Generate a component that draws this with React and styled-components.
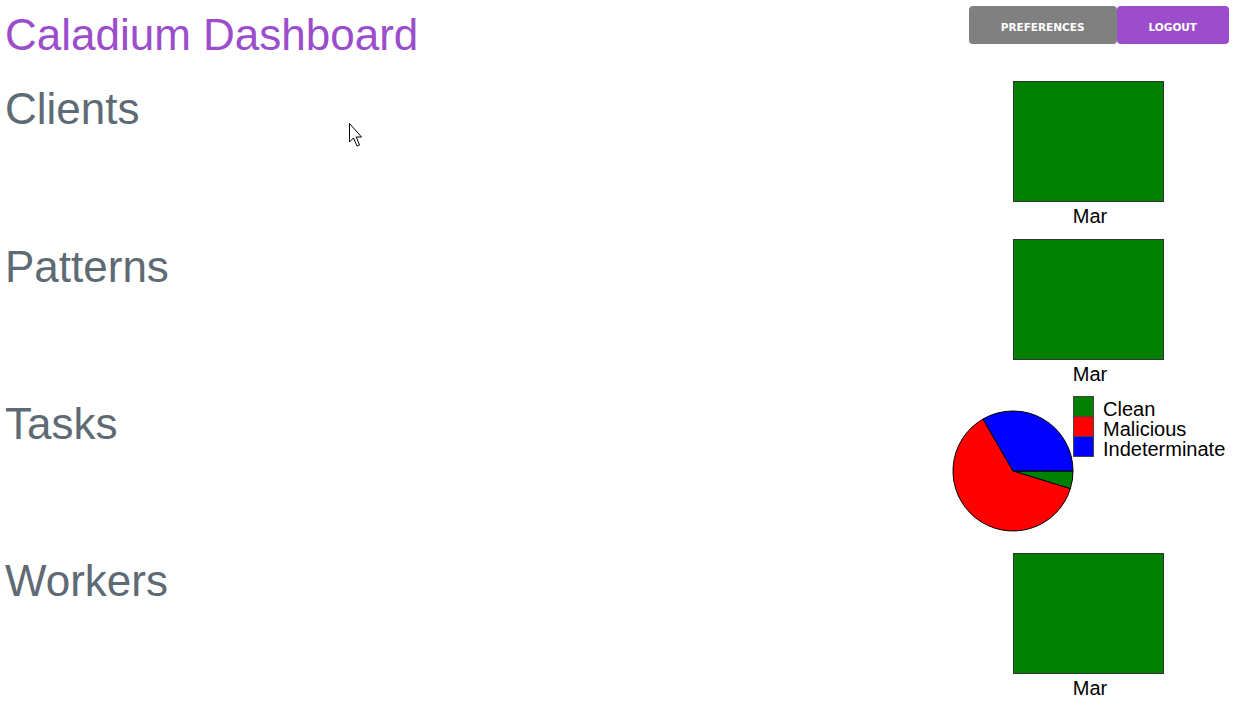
import React from 'react';
import styled, { createGlobalStyle } from 'styled-components';

const GlobalStyle = createGlobalStyle`
  html, body {
    margin: 0;
    padding: 0;
    overflow: hidden;
    background: #ffffff;
    font-family: "Liberation Sans", Arial, sans-serif;
  }
`;

const PURPLE = '#9c4dcc';

const Page = styled.div`
  position: relative;
  width: 1235px;
  height: 707px;
`;

const Header = styled.header`
  display: flex;
  justify-content: space-between;
  align-items: flex-start;
  height: 81px;
`;

const Title = styled.h1`
  margin: 10px 0 0 5px;
  font-size: 44px;
  line-height: 50px;
  font-weight: normal;
  color: ${PURPLE};
`;

const Actions = styled.div`
  display: flex;
  margin: 6px 6px 0 0;
`;

const Button = styled.button`
  height: 38px;
  padding: 3px 32px 0;
  border: none;
  border-radius: 4px;
  background: ${(p) => (p.$primary ? PURPLE : '#808080')};
  color: #ffffff;
  font-family: "DejaVu Sans", Verdana, sans-serif;
  font-weight: bold;
  font-size: 10.5px;
  text-transform: uppercase;
  cursor: pointer;
`;

const Section = styled.section`
  display: flex;
  justify-content: space-between;
  align-items: flex-start;
  height: 157px;

  &:first-of-type {
    height: 158px;
  }
`;

const SectionTitle = styled.h2`
  margin: 3px 0 0 5px;
  font-size: 44px;
  line-height: 50px;
  font-weight: normal;
  color: #5e6a74;
`;

const ChartSvg = styled.svg`
  display: block;
  flex: none;
  font-family: "Liberation Sans", Arial, sans-serif;
`;

const Pointer = styled.svg`
  position: absolute;
  left: 349px;
  top: 123px;
`;

function BarChart() {
  return (
    <ChartSvg width="300" height="157" viewBox="0 0 300 157">
      <rect x="78.5" y="0.5" width="150" height="120" fill="#008000" stroke="#333" strokeWidth="1" />
      <text x="155" y="142" fontSize="20" textAnchor="middle" fill="#000">Mar</text>
    </ChartSvg>
  );
}

const slices = [
  { label: 'Clean', value: 1, color: '#008000' },
  { label: 'Malicious', value: 13, color: '#ff0000' },
  { label: 'Indeterminate', value: 7, color: '#0000ff' },
];

function PieChart() {
  const cx = 78;
  const cy = 75;
  const r = 60;
  const total = slices.reduce((s, x) => s + x.value, 0);
  let start = 0;
  const paths = slices.map((s) => {
    const a0 = (start / total) * Math.PI * 2;
    start += s.value;
    const a1 = (start / total) * Math.PI * 2;
    const large = a1 - a0 > Math.PI ? 1 : 0;
    const x0 = cx + r * Math.cos(a0);
    const y0 = cy + r * Math.sin(a0);
    const x1 = cx + r * Math.cos(a1);
    const y1 = cy + r * Math.sin(a1);
    const d = `M${cx},${cy} L${x0},${y0} A${r},${r} 0 ${large} 1 ${x1},${y1} Z`;
    return <path key={s.label} d={d} fill={s.color} stroke="#000" strokeWidth="1" />;
  });

  return (
    <ChartSvg width="300" height="157" viewBox="0 0 300 157">
      {paths}
      {slices.map((s, i) => (
        <g key={s.label}>
          <rect x="138.5" y={0.5 + i * 20} width="20" height="20" fill={s.color} stroke="#444" strokeWidth="1" />
          <text x="168" y={19.5 + i * 20} fontSize="20" fill="#000">{s.label}</text>
        </g>
      ))}
    </ChartSvg>
  );
}

export default function App() {
  return (
    <Page>
      <GlobalStyle />
      <Header>
        <Title>Caladium Dashboard</Title>
        <Actions>
          <Button>Preferences</Button>
          <Button $primary>Logout</Button>
        </Actions>
      </Header>
      <Section>
        <SectionTitle>Clients</SectionTitle>
        <BarChart />
      </Section>
      <Section>
        <SectionTitle>Patterns</SectionTitle>
        <BarChart />
      </Section>
      <Section>
        <SectionTitle>Tasks</SectionTitle>
        <PieChart />
      </Section>
      <Section>
        <SectionTitle>Workers</SectionTitle>
        <BarChart />
      </Section>
      <Pointer width="14" height="26" viewBox="0 0 14 26">
        <path d="M0.5,0.5 L0.5,19 L4.5,15 L8,23 L10.5,22 L7.2,14 L12.5,14 Z" fill="#fff" stroke="#000" strokeWidth="1" strokeLinejoin="round" />
      </Pointer>
    </Page>
  );
}
